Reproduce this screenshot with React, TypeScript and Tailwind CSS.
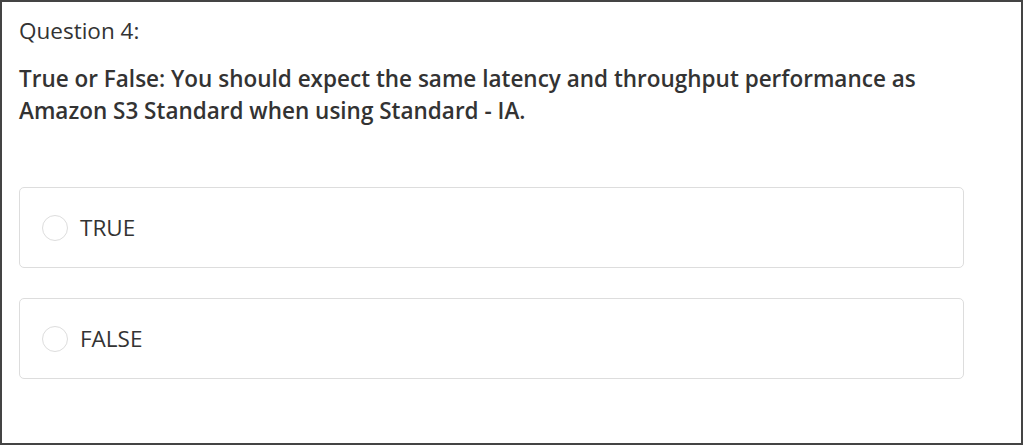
import React from "react";

function Option({ label }: { label: string }) {
  return (
    <div className="flex h-[81px] w-[945px] items-center rounded-[5px] border border-[#dddddd] bg-white pl-[22px]">
      <span className="h-[26px] w-[26px] shrink-0 rounded-full border border-[#dddddd] bg-white" />
      <span className="ml-[12px] text-[22.5px] leading-[30px] text-[#333333]">{label}</span>
    </div>
  );
}

export default function App() {
  return (
    <div
      className="h-[445px] w-[1023px] border-2 border-[#444444] bg-white pl-[17px] pt-[14px]"
      style={{ fontFamily: '"Open Sans", sans-serif' }}
    >
      <div className="text-[22.5px] leading-[30px] font-normal text-[#333333]">Question 4:</div>
      <div className="mt-[17px] w-[960px] text-[22.5px] leading-[32px] font-semibold text-[#333333]">
        True or False: You should expect the same latency and throughput performance as Amazon S3 Standard when using Standard - IA.
      </div>
      <div className="mt-[60px] flex flex-col gap-[30px]">
        <Option label="TRUE" />
        <Option label="FALSE" />
      </div>
    </div>
  );
}
